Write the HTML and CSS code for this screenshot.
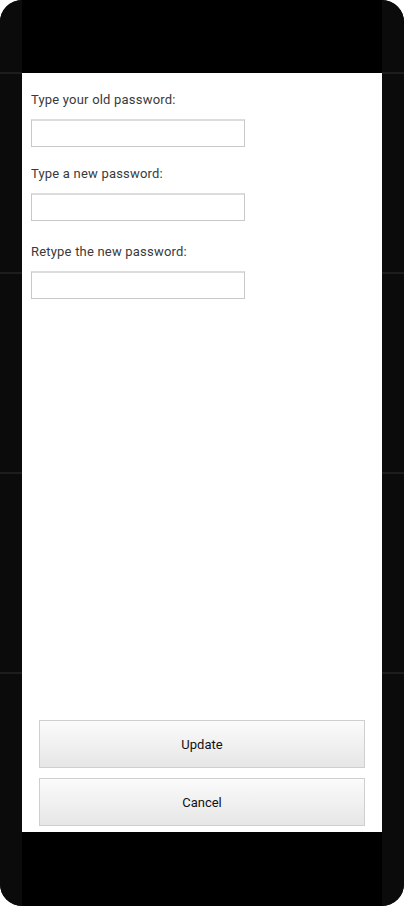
FILE: index.html
```html
<!DOCTYPE html>
<html>
<head>
<meta charset="utf-8">
<link rel="stylesheet" href="styles.css">
</head>
<body>
<div class="frame">
  <div class="side"></div>
  <div class="center">
    <div class="topbar"></div>
    <div class="panel">
      <div class="fields">
        <label class="label first">Type your old password:</label>
        <input class="input" type="password">
        <label class="label second">Type a new password:</label>
        <input class="input" type="password">
        <label class="label third">Retype the new password:</label>
        <input class="input" type="password">
      </div>
      <div class="buttons">
        <button class="btn">Update</button>
        <button class="btn">Cancel</button>
      </div>
    </div>
    <div class="bottombar"></div>
  </div>
  <div class="side"></div>
</div>
</body>
</html>
```
FILE: styles.css
```css
html, body {
  margin: 0;
  padding: 0;
  background: #ffffff;
}
.frame {
  width: 404px;
  height: 906px;
  border-radius: 22px;
  overflow: hidden;
  background: #0b0b0b;
  display: grid;
  grid-template-columns: 22px 1fr 22px;
}
.side {
  background:
    linear-gradient(#1d1d1d, #1d1d1d) 0 72px / 100% 2px no-repeat,
    linear-gradient(#1d1d1d, #1d1d1d) 0 272px / 100% 2px no-repeat,
    linear-gradient(#1d1d1d, #1d1d1d) 0 472px / 100% 2px no-repeat,
    linear-gradient(#1d1d1d, #1d1d1d) 0 672px / 100% 2px no-repeat,
    #0b0b0b;
}
.center {
  display: flex;
  flex-direction: column;
  background: #000;
}
.topbar {
  height: 73px;
  background: #000;
}
.bottombar {
  height: 74px;
  background: #000;
}
.panel {
  flex: 1;
  background: #fff;
  display: flex;
  flex-direction: column;
  padding: 19px 0 6px 0;
  font-family: Roboto, "Liberation Sans", sans-serif;
}
.fields {
  display: flex;
  flex-direction: column;
  align-items: flex-start;
  padding-left: 9px;
}
.label {
  font-size: 13px;
  line-height: 16px;
  letter-spacing: 0.2px;
  color: #3a3a3a;
  margin-bottom: 11px;
}
.label.second { margin-top: 19px; }
.label.third { margin-top: 23px; }
.input {
  box-sizing: border-box;
  width: 214px;
  height: 28px;
  margin: 0;
  border: 1px solid #c8c8c8;
  border-top: 2px solid #dcdcdc;
  background: #fff;
  padding: 0 4px;
}
.buttons {
  margin-top: auto;
  display: flex;
  flex-direction: column;
  gap: 10px;
  padding: 0 17px;
}
.btn {
  box-sizing: border-box;
  height: 48px;
  width: 100%;
  border: 1px solid #cfcfcf;
  background: linear-gradient(#fbfbfb, #e6e6e6);
  font-family: Roboto, "Liberation Sans", sans-serif;
  font-size: 13px;
  color: #111;
  padding: 0;
}
```
